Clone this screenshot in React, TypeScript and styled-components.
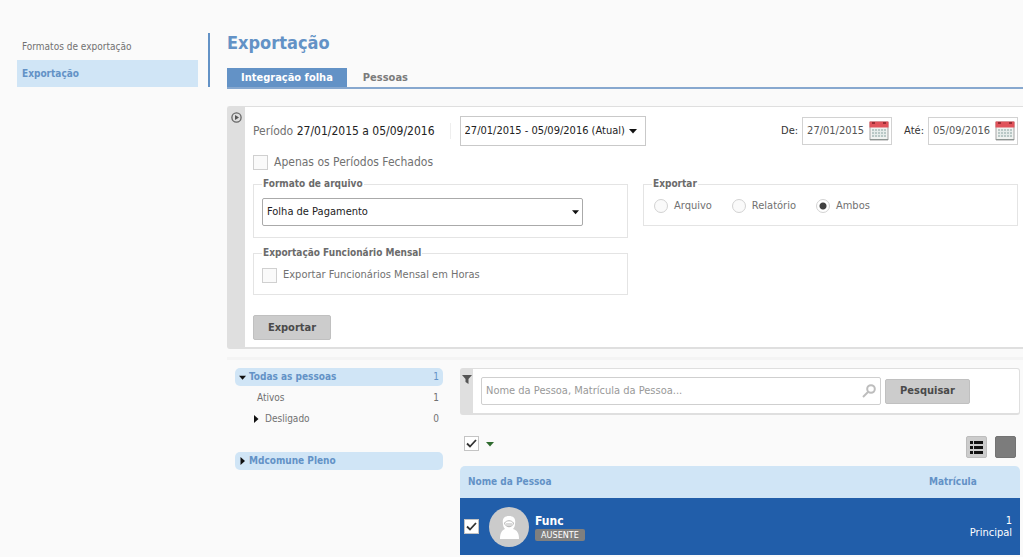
import React from "react";
import styled, { createGlobalStyle, css } from "styled-components";

const blue = "#6392c6";
const paleBlue = "#d0e5f6";
const grey = "#717171";

const GlobalStyle = createGlobalStyle`
  * { box-sizing: border-box; }
  body {
    margin: 0;
    background: #fafafa;
    color: ${grey};
    font-family: "DejaVu Sans Condensed", "DejaVu Sans", "Noto Sans", sans-serif;
    font-size: 10px;
    line-height: 16px;
  }
  button, input, select { font: inherit; color: inherit; margin: 0; }
  ul { list-style: none; margin: 0; padding: 0; }
`;

const Page = styled.div`
  display: flex;
  align-items: flex-start;
  padding-top: 33px;
`;

const SideNav = styled.nav`
  flex: none;
  width: 210px;
  padding: 0 10px 0 17px;
  border-right: 2px solid ${blue};
`;

const SideLink = styled.a<{ $active?: boolean }>`
  display: block;
  height: 27px;
  padding: 0 5px;
  line-height: 27px;
  color: ${grey};
  text-decoration: none;
  ${(p) => p.$active && css`
    background: ${paleBlue};
    color: ${blue};
    font-weight: bold;
  `}
`;

const Main = styled.main`
  flex: 1;
  min-width: 0;
  padding-left: 17px;
`;

const Title = styled.h1`
  margin: 0 0 15px;
  color: ${blue};
  font-size: 18px;
  line-height: 20px;
`;

const Tabs = styled.div`
  display: flex;
  margin-bottom: 17px;
  border-bottom: 2px solid #87a8cf;
`;

const Tab = styled.button<{ $active?: boolean }>`
  height: 19px;
  padding: 0 ${(p) => (p.$active ? 14 : 16)}px;
  border: 0;
  background: ${(p) => (p.$active ? blue : "transparent")};
  color: ${(p) => (p.$active ? "#fff" : "#7b7b7b")};
  font-size: 11px;
  font-weight: bold;
  line-height: 19px;
`;

const Panel = styled.section`
  display: flex;
  border: 1px solid #dfdfdf;
  border-bottom-width: 2px;
  border-right: 0;
  border-radius: 3px 0 0 3px;
  background: #fff;
`;

const PanelHandle = styled.button`
  display: flex;
  flex: none;
  justify-content: center;
  width: 17px;
  padding: 5px 0;
  border: 0;
  background: #dfdfdf;
`;

const ExportForm = styled.form`
  flex: 1;
  min-width: 0;
  padding: 9px 5px 7px 8px;
`;

const PeriodRow = styled.div`
  display: flex;
  align-items: center;
  height: 30px;
  margin-bottom: 8px;
  font-size: 12px;
`;

const PeriodText = styled.div`
  padding-right: 15px;
  border-right: 1px solid #eee;
  margin-right: 9px;
  white-space: nowrap;
  b { color: #222; font-weight: normal; }
`;

const SelectBox = styled.span<{ $width: number; $dark?: boolean }>`
  position: relative;
  display: block;
  width: ${(p) => p.$width}px;
  max-width: 100%;
  svg {
    position: absolute;
    top: 50%;
    right: ${(p) => (p.$dark ? 4 : 9)}px;
    transform: translateY(-50%);
    pointer-events: none;
  }
  select {
    appearance: none;
    display: block;
    width: 100%;
    height: ${(p) => (p.$dark ? 28 : 30)}px;
    padding: 0 4px;
    border: 1px solid ${(p) => (p.$dark ? "#aaa" : "#c9c9c9")};
    border-radius: ${(p) => (p.$dark ? 2 : 0)}px;
    background: #fff;
    color: #222;
    font-size: 11px;
  }
`;

const Dates = styled.div`
  display: flex;
  gap: 12px;
  margin-left: auto;
`;

const DateLabel = styled.label`
  display: flex;
  align-items: center;
  gap: 4px;
  color: #333;
  font-size: 11px;
`;

const DateBox = styled.span`
  display: flex;
  align-items: center;
  width: 90px;
  height: 28px;
  padding: 0 2px 0 4px;
  border: 1px solid #d2d2d2;
  input {
    flex: 1;
    min-width: 0;
    padding: 0;
    border: 0;
    background: none;
    color: #555;
    font-size: 11px;
  }
`;

const CheckLabel = styled.label<{ $small?: boolean }>`
  display: flex;
  align-items: center;
  gap: 6px;
  height: 16px;
  font-size: ${(p) => (p.$small ? 11 : 12)}px;
`;

const TickBox = styled.span`
  display: grid;
  flex: none;
  width: 15px;
  height: 15px;
  > * { grid-area: 1 / 1; }
  svg { place-self: center; pointer-events: none; }
  input {
    appearance: none;
    width: 15px;
    height: 15px;
    border: 1px solid #d0d0d0;
    background: #fafafa;
  }
  input:checked { background: #fff; border-color: #c4c4c4; }
`;

const Columns = styled.div`
  display: grid;
  grid-template-columns: 1fr 1fr;
  align-items: start;
  gap: 15px;
  margin: 7px 0 20px;
`;

const Stack = styled.div`
  display: grid;
  gap: 8px;
`;

const Group = styled.fieldset<{ $height: number }>`
  min-width: 0;
  height: ${(p) => p.$height}px;
  margin: 0;
  padding: 7px 8px 0;
  border: 1px solid #e4e4e4;
  legend {
    padding: 0 1px;
    font-weight: bold;
    line-height: 14px;
    color: #6b6b6b;
  }
`;

const Radios = styled.div`
  display: flex;
  gap: 20px;
  padding-left: 2px;
  font-size: 11px;
  label { display: flex; align-items: center; gap: 6px; }
  input {
    appearance: none;
    width: 14px;
    height: 14px;
    border: 1px solid #d2d2d2;
    border-radius: 50%;
    background: #fafafa;
  }
  input:checked {
    background: radial-gradient(circle, #404040 3px, #fff 4px);
  }
`;

const Button = styled.button<{ $width: number }>`
  width: ${(p) => p.$width}px;
  height: 25px;
  padding: 0;
  border: 1px solid #c0c0c0;
  border-radius: 2px;
  background: #cccccc;
  color: #4a4a4a;
  font-size: 11px;
  font-weight: bold;
`;

const Divider = styled.hr`
  height: 3px;
  margin: 8px 0;
  border: 0;
  background: #f4f4f4;
`;

const Lower = styled.div`
  display: grid;
  grid-template-columns: 208px 1fr;
  gap: 17px;
  padding: 0 3px 3px 8px;
`;

const TreeGroup = styled.li`
  margin-bottom: 23px;
`;

const TreeHead = styled.button`
  display: flex;
  align-items: center;
  gap: 3px;
  width: 100%;
  height: 18px;
  padding: 0 4px;
  border: 0;
  border-radius: 5px;
  margin-bottom: 1px;
  background: ${paleBlue};
  color: ${blue};
  font-weight: bold;
  svg { flex: none; width: 7px; }
  output { margin-left: auto; font-weight: normal; }
`;

const TreeItem = styled.a<{ $branch?: boolean }>`
  display: flex;
  align-items: center;
  gap: 6px;
  height: 21px;
  padding: 0 4px 0 ${(p) => (p.$branch ? 18 : 22)}px;
  color: ${grey};
  text-decoration: none;
  span { margin-left: auto; }
`;

const SearchPanel = styled.form`
  display: flex;
  height: 47px;
  border: 1px solid #dfdfdf;
  border-bottom-width: 2px;
  border-radius: 3px;
  background: #fff;
`;

const FilterHandle = styled(PanelHandle)`
  width: 12px;
`;

const SearchBody = styled.div`
  display: flex;
  flex: 1;
  align-items: center;
  gap: 4px;
  padding: 0 49px 0 8px;
`;

const SearchField = styled.label`
  display: flex;
  flex: 1;
  align-items: center;
  height: 28px;
  padding: 0 4px;
  border: 1px solid #cfcfcf;
  border-radius: 2px;
  input {
    flex: 1;
    min-width: 0;
    padding: 0;
    border: 0;
    outline: 0;
    background: none;
    font-size: 11px;
  }
  input::placeholder { color: #999; opacity: 1; }
`;

const Toolbar = styled.div`
  display: flex;
  align-items: flex-start;
  gap: 7px;
  height: 22px;
  margin: 21px 4px 8px 4px;
`;

const MenuButton = styled.button`
  display: flex;
  align-items: center;
  height: 15px;
  padding: 0;
  border: 0;
  background: none;
`;

const ViewButtons = styled.div`
  display: flex;
  gap: 8px;
  margin-left: auto;
`;

const ViewButton = styled.button<{ $dark?: boolean }>`
  display: grid;
  place-items: center;
  width: 21px;
  height: 22px;
  padding: 0;
  border: 1px solid ${(p) => (p.$dark ? "#737373" : "#bdbdbd")};
  border-radius: 2px;
  background: ${(p) => (p.$dark ? "#7c7c7c" : "#cccccc")};
`;

const People = styled.table`
  width: 100%;
  border-spacing: 0;
  th {
    height: 32px;
    padding: 0 8px;
    background: ${paleBlue};
    color: ${blue};
    text-align: left;
  }
  th:first-child { border-top-left-radius: 5px; }
  th:last-child { width: 99px; border-top-right-radius: 5px; }
  td {
    height: 57px;
    padding: 0 8px 0 4px;
    background: #215eaa;
    color: #fff;
  }
  td:last-child {
    text-align: right;
    font-size: 11px;
    line-height: 12px;
  }
`;

const Person = styled.div`
  display: flex;
  align-items: center;
`;

const Avatar = styled.svg`
  flex: none;
  margin: 0 6px 0 10px;
`;

const PersonName = styled.div`
  font-size: 12px;
  font-weight: bold;
  line-height: 16px;
`;

const Badge = styled.div`
  width: 50px;
  border-radius: 2px;
  background: #7f7f7f;
  font-size: 9px;
  line-height: 12px;
  text-align: center;
`;

const Down = ({ size = 8, color = "#111" }: { size?: number; color?: string }) => (
  <svg width={size} height={size} viewBox="0 0 8 8" fill={color}><path d="M0 2h8L4 6.500z" /></svg>
);

const Right = () => (
  <svg width="6" height="8" viewBox="0 0 6 8" fill="#111"><path d="M1 0l4.500 4L1 8z" /></svg>
);

const CalendarIcon = () => (
  <svg width="20" height="20" viewBox="0 0 20 20">
    <path d="M1 1h18v18H1z" fill="#f1f3f1" stroke="#a5a5a5" />
    <path d="M.5.500h19v6H.5z" fill="#e0525a" />
    <path d="M3 1h3v2H3zM14 1h3v2h-3z" fill="#9a2c34" />
    <path d="M3 8h14v8H3z" fill="#b9c8c6" />
    <path d="M5.500 8v8M8.500 8v8M11.500 8v8M14.500 8v8M3 10.500h14M3 13.500h14" stroke="#e6ecea" />
    <path d="M1 18.500h18" stroke="#8d9592" />
  </svg>
);

const Check = ({ label, checked }: { label?: string; checked?: boolean }) => (
  <TickBox>
    <input type="checkbox" defaultChecked={checked} aria-label={label} />
    {checked && (
      <svg width="11" height="11" viewBox="0 0 11 11" fill="none" stroke="#333" strokeWidth="1.800">
        <path d="M1 5.500l3 3L10 2" />
      </svg>
    )}
  </TickBox>
);

const DateField = ({ label, value }: { label: string; value: string }) => (
  <DateLabel>
    {label}
    <DateBox><input type="text" defaultValue={value} /><CalendarIcon /></DateBox>
  </DateLabel>
);

export default function App() {
  return (
    <>
      <GlobalStyle />
      <Page>
        <SideNav>
          <SideLink href="#formatos">Formatos de exportação</SideLink>
          <SideLink href="#exportacao" $active>Exportação</SideLink>
        </SideNav>
        <Main>
          <Title>Exportação</Title>
          <Tabs role="tablist">
            <Tab role="tab" aria-selected="true" $active>Integração folha</Tab>
            <Tab role="tab" aria-selected="false">Pessoas</Tab>
          </Tabs>

          <Panel>
            <PanelHandle type="button" aria-label="Recolher">
              <svg width="11" height="11" viewBox="0 0 11 11">
                <circle cx="5.500" cy="5.500" r="4.600" fill="none" stroke="#666" strokeWidth="1.300" />
                <path d="M4 3l4 2.500L4 8z" fill="#555" />
              </svg>
            </PanelHandle>
            <ExportForm>
              <PeriodRow>
                <PeriodText>Período <b>27/01/2015 a 05/09/2016</b></PeriodText>
                <SelectBox $width={186}>
                  <select aria-label="Período"><option>27/01/2015 - 05/09/2016 (Atual)</option></select>
                  <Down />
                </SelectBox>
                <Dates>
                  <DateField label="De:" value="27/01/2015" />
                  <DateField label="Até:" value="05/09/2016" />
                </Dates>
              </PeriodRow>
              <CheckLabel><Check />Apenas os Períodos Fechados</CheckLabel>
              <Columns>
                <Stack>
                  <Group $height={61}>
                    <legend>Formato de arquivo</legend>
                    <SelectBox $width={321} $dark>
                      <select aria-label="Formato de arquivo"><option>Folha de Pagamento</option></select>
                      <Down size={7} />
                    </SelectBox>
                  </Group>
                  <Group $height={49}>
                    <legend>Exportação Funcionário Mensal</legend>
                    <CheckLabel $small><Check />Exportar Funcionários Mensal em Horas</CheckLabel>
                  </Group>
                </Stack>
                <Group $height={49}>
                  <legend>Exportar</legend>
                  <Radios>
                    <label><input type="radio" name="saida" />Arquivo</label>
                    <label><input type="radio" name="saida" />Relatório</label>
                    <label><input type="radio" name="saida" defaultChecked />Ambos</label>
                  </Radios>
                </Group>
              </Columns>
              <Button type="button" $width={78}>Exportar</Button>
            </ExportForm>
          </Panel>

          <Divider />

          <Lower>
            <ul>
              <TreeGroup>
                <TreeHead><Down size={7} />Todas as pessoas<output>1</output></TreeHead>
                <TreeItem href="#ativos">Ativos<span>1</span></TreeItem>
                <TreeItem href="#desligado" $branch><Right />Desligado<span>0</span></TreeItem>
              </TreeGroup>
              <TreeGroup>
                <TreeHead><Right />Mdcomune Pleno</TreeHead>
              </TreeGroup>
            </ul>
            <div>
              <SearchPanel>
                <FilterHandle type="button" aria-label="Filtro">
                  <svg width="10" height="10" viewBox="0 0 10 10" fill="#555"><path d="M0 1h10L6.500 5v5L3.500 8V5z" /></svg>
                </FilterHandle>
                <SearchBody>
                  <SearchField>
                    <input type="text" aria-label="Pesquisar pessoa" placeholder="Nome da Pessoa, Matrícula da Pessoa..." />
                    <svg width="14" height="14" viewBox="0 0 14 14" fill="none" stroke="#bdbdbd" strokeWidth="2">
                      <circle cx="9" cy="5" r="3.800" /><path d="M6 8l-5 5" />
                    </svg>
                  </SearchField>
                  <Button type="button" $width={85}>Pesquisar</Button>
                </SearchBody>
              </SearchPanel>

              <Toolbar>
                <Check label="Selecionar todos" checked />
                <MenuButton aria-label="Opções de seleção"><Down color="#2f6b2f" /></MenuButton>
                <ViewButtons>
                  <ViewButton aria-label="Lista">
                    <svg width="13" height="13" viewBox="0 0 13 13" fill="#111">
                      <path d="M0 0h3v3H0zM4 0h9v3H4zM0 5h3v3H0zM4 5h9v3H4zM0 10h3v3H0zM4 10h9v3H4z" />
                    </svg>
                  </ViewButton>
                  <ViewButton $dark aria-label="Grade" />
                </ViewButtons>
              </Toolbar>

              <People>
                <thead>
                  <tr><th>Nome da Pessoa</th><th>Matrícula</th></tr>
                </thead>
                <tbody>
                  <tr>
                    <td>
                      <Person>
                        <Check label="Func" checked />
                        <Avatar width="40" height="40" viewBox="0 0 40 40">
                          <circle cx="20" cy="20" r="20" fill="#cbcbcb" />
                          <path d="M14 17c-1-5 1-8 6-8s7 3 6 8c0 2-1 4-2 5 4 1 6 4 6 10H11c0-6 2-9 5-10-1-1-2-3-2-5z" fill="#fff" />
                          <path d="M15.500 16c2-3 7-3 9 0-1 5-8 5-9 0zM17 17h6M18 19h4" fill="none" stroke="#b5b5b5" />
                        </Avatar>
                        <div>
                          <PersonName>Func</PersonName>
                          <Badge>AUSENTE</Badge>
                        </div>
                      </Person>
                    </td>
                    <td>1<br />Principal</td>
                  </tr>
                </tbody>
              </People>
            </div>
          </Lower>
        </Main>
      </Page>
    </>
  );
}
